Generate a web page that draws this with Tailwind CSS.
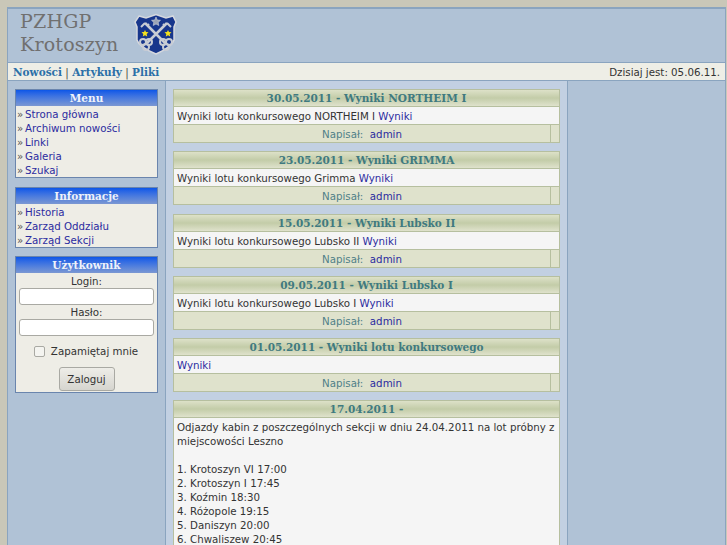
<!DOCTYPE html>
<html lang="pl">
<head>
<meta charset="UTF-8">
<title>PZHGP Krotoszyn</title>
<script src="https://cdn.jsdelivr.net/npm/@tailwindcss/browser@4"></script>
</head>
<body class="h-[545px] overflow-hidden bg-[#c9c7b8] pt-[7px] pl-[7px] pr-px font-['DejaVu_Sans',sans-serif] text-[10.25px] leading-[14px] text-[#333]">
<div class="h-[538px] overflow-hidden border-t-2 border-l border-r border-[#8aa4bf] bg-[#b0c2d6]">
  <!-- header -->
  <div class="flex h-[53px] items-start">
    <div class="ml-[12px] mt-[1px] w-[114px] font-['DejaVu_Serif',serif] text-[19px] leading-[23px] tracking-[0.2px] text-[#707070]">PZHGP<br>Krotoszyn</div>
    <svg class="mt-[4px]" width="43" height="42" viewBox="0 0 43 42">
      <path d="M5 3 L12 5 L22 1.500 L32 5 L39 3 L42 9 L40 14 L40 27 Q38 34 22 41 Q5 34 3 27 L3 14 L1 9 Z" fill="#17368c" stroke="#d5d8de" stroke-width="1.500"/>
      <path d="M13 30 L33 10 M31 30 L11 10" stroke="#c8ccd4" stroke-width="2.500" fill="none"/>
      <path d="M33 10 L37 14 M29 11 L31 13 M11 10 L7 14 M15 11 L13 13" stroke="#c8ccd4" stroke-width="2" fill="none"/>
      <g fill="none" stroke="#c8ccd4" stroke-width="2">
        <circle cx="9" cy="29" r="3"/><circle cx="15" cy="29" r="3"/><circle cx="12" cy="34" r="3"/>
        <circle cx="29" cy="29" r="3"/><circle cx="35" cy="29" r="3"/><circle cx="32" cy="34" r="3"/>
      </g>
      <polygon points="22,4 23.300,7 26.500,7.300 24.200,9.400 24.800,12.500 22,11 19.200,12.500 19.800,9.400 17.500,7.300 20.700,7" fill="#9aa3b5" stroke="#e2e5ea" stroke-width="0.500"/>
      <polygon points="11,17 12,19 14.500,19.300 12.700,21 13.200,23.500 11,22.300 8.800,23.500 9.300,21 7.500,19.300 10,19" fill="#f4e21c"/>
      <polygon points="34,17 35,19 37.500,19.300 35.700,21 36.200,23.500 34,22.300 31.800,23.500 32.300,21 30.500,19.300 33,19" fill="#f4e21c"/>
    </svg>
  </div>
  <!-- nav -->
  <div class="flex h-[19px] items-center justify-between border-t border-b border-[#8aa4bf] bg-[#eeeee6] pl-[5px] pr-[5px]">
    <div class="font-['DejaVu_Serif',serif] text-[10.5px] text-[#444]"><a class="font-bold text-[#2b70a8]">Nowości</a> | <a class="font-bold text-[#2b70a8]">Artykuły</a> | <a class="font-bold text-[#2b70a8]">Pliki</a></div>
    <div>Dzisiaj jest: 05.06.11.</div>
  </div>
  <div class="flex h-[470px]">
    <!-- left column -->
    <div class="flex w-[157px] shrink-0 flex-col gap-[8.500px] pt-[8px] pl-[7px]">
      <div class="w-[143px] border border-[#6a85ad] bg-[#eeede6]">
        <div class="h-[16px] bg-gradient-to-b from-[#0a56e8] to-[#7b97d2] text-center font-['DejaVu_Serif',serif] text-[10.5px] leading-[16px] font-bold text-[#eef2fa]">Menu</div>
        <ul class="h-[71px] pt-[1px] text-[#2b2ba0]">
          <li class="flex"><span class="ml-[1px] w-[8px] text-[#555]">»</span>Strona główna</li>
          <li class="flex"><span class="ml-[1px] w-[8px] text-[#555]">»</span>Archiwum nowości</li>
          <li class="flex"><span class="ml-[1px] w-[8px] text-[#555]">»</span>Linki</li>
          <li class="flex"><span class="ml-[1px] w-[8px] text-[#555]">»</span>Galeria</li>
          <li class="flex"><span class="ml-[1px] w-[8px] text-[#555]">»</span>Szukaj</li>
        </ul>
      </div>
      <div class="w-[143px] border border-[#6a85ad] bg-[#eeede6]">
        <div class="h-[16px] bg-gradient-to-b from-[#0a56e8] to-[#7b97d2] text-center font-['DejaVu_Serif',serif] text-[10.5px] leading-[16px] font-bold text-[#eef2fa]">Informacje</div>
        <ul class="h-[43px] pt-[1px] text-[#2b2ba0]">
          <li class="flex"><span class="ml-[1px] w-[8px] text-[#555]">»</span>Historia</li>
          <li class="flex"><span class="ml-[1px] w-[8px] text-[#555]">»</span>Zarząd Oddziału</li>
          <li class="flex"><span class="ml-[1px] w-[8px] text-[#555]">»</span>Zarząd Sekcji</li>
        </ul>
      </div>
      <div class="w-[143px] border border-[#6a85ad] bg-[#eeede6]">
        <div class="h-[16px] bg-gradient-to-b from-[#0a56e8] to-[#7b97d2] text-center font-['DejaVu_Serif',serif] text-[10.5px] leading-[16px] font-bold text-[#eef2fa]">Użytkownik</div>
        <div class="flex h-[119px] flex-col items-center">
          <div class="mt-[1px] h-[14px]">Login:</div>
          <div class="h-[17px] w-[135px] rounded-[3px] border border-[#a9a9a3] bg-white"></div>
          <div class="h-[14px]">Hasło:</div>
          <div class="h-[17px] w-[135px] rounded-[3px] border border-[#a9a9a3] bg-white"></div>
          <div class="mt-[8px] flex h-[14px] items-center gap-[6px] pr-[1px]">
            <span class="h-[11px] w-[11px] rounded-[2px] border border-[#a9a9a3] bg-[#f4f4f0]"></span>
            <span>Zapamiętaj mnie</span>
          </div>
          <div class="mt-[9px] flex h-[24px] w-[56px] items-center justify-center rounded-[3px] border border-[#a9a9a3] bg-gradient-to-b from-[#eeede8] to-[#d6d5cf]">Zaloguj</div>
        </div>
      </div>
    </div>
    <!-- center column -->
    <div class="flex w-[403px] shrink-0 flex-col gap-[8.300px] border-l border-r border-[#8aa4bf] bg-[#c2d0e2] pt-[8px] pl-[7px]">
      <div class="w-[387px] border border-[#b6bf9f] bg-[#dfe2cc]">
        <div class="h-[16px] bg-gradient-to-b from-[#dde1c8] via-[#c3cca8] to-[#dfe2cc] text-center font-['DejaVu_Serif',serif] text-[10.5px] leading-[16px] font-bold text-[#3f7a80]">30.05.2011 - Wyniki NORTHEIM I</div>
        <div class="h-[19px] border-t border-b border-[#b6bf9f] bg-[#f5f5f5] px-[3px] pt-[2px]">Wyniki lotu konkursowego NORTHEIM I <a class="text-[#2b2ba0]">Wyniki</a></div>
        <div class="flex h-[17px] leading-[18px]">
          <div class="flex-1 text-center text-[#4f8088]">Napisał:&nbsp; <a class="text-[#2b2ba0]">admin</a></div>
          <div class="w-[9px] border-l border-[#b6bf9f]"></div>
        </div>
      </div>
      <div class="w-[387px] border border-[#b6bf9f] bg-[#dfe2cc]">
        <div class="h-[16px] bg-gradient-to-b from-[#dde1c8] via-[#c3cca8] to-[#dfe2cc] text-center font-['DejaVu_Serif',serif] text-[10.5px] leading-[16px] font-bold text-[#3f7a80]">23.05.2011 - Wyniki GRIMMA</div>
        <div class="h-[19px] border-t border-b border-[#b6bf9f] bg-[#f5f5f5] px-[3px] pt-[2px]">Wyniki lotu konkursowego Grimma <a class="text-[#2b2ba0]">Wyniki</a></div>
        <div class="flex h-[17px] leading-[18px]">
          <div class="flex-1 text-center text-[#4f8088]">Napisał:&nbsp; <a class="text-[#2b2ba0]">admin</a></div>
          <div class="w-[9px] border-l border-[#b6bf9f]"></div>
        </div>
      </div>
      <div class="w-[387px] border border-[#b6bf9f] bg-[#dfe2cc]">
        <div class="h-[16px] bg-gradient-to-b from-[#dde1c8] via-[#c3cca8] to-[#dfe2cc] text-center font-['DejaVu_Serif',serif] text-[10.5px] leading-[16px] font-bold text-[#3f7a80]">15.05.2011 - Wyniki Lubsko II</div>
        <div class="h-[19px] border-t border-b border-[#b6bf9f] bg-[#f5f5f5] px-[3px] pt-[2px]">Wyniki lotu konkursowego Lubsko II <a class="text-[#2b2ba0]">Wyniki</a></div>
        <div class="flex h-[17px] leading-[18px]">
          <div class="flex-1 text-center text-[#4f8088]">Napisał:&nbsp; <a class="text-[#2b2ba0]">admin</a></div>
          <div class="w-[9px] border-l border-[#b6bf9f]"></div>
        </div>
      </div>
      <div class="w-[387px] border border-[#b6bf9f] bg-[#dfe2cc]">
        <div class="h-[16px] bg-gradient-to-b from-[#dde1c8] via-[#c3cca8] to-[#dfe2cc] text-center font-['DejaVu_Serif',serif] text-[10.5px] leading-[16px] font-bold text-[#3f7a80]">09.05.2011 - Wyniki Lubsko I</div>
        <div class="h-[19px] border-t border-b border-[#b6bf9f] bg-[#f5f5f5] px-[3px] pt-[2px]">Wyniki lotu konkursowego Lubsko I <a class="text-[#2b2ba0]">Wyniki</a></div>
        <div class="flex h-[17px] leading-[18px]">
          <div class="flex-1 text-center text-[#4f8088]">Napisał:&nbsp; <a class="text-[#2b2ba0]">admin</a></div>
          <div class="w-[9px] border-l border-[#b6bf9f]"></div>
        </div>
      </div>
      <div class="w-[387px] border border-[#b6bf9f] bg-[#dfe2cc]">
        <div class="h-[16px] bg-gradient-to-b from-[#dde1c8] via-[#c3cca8] to-[#dfe2cc] text-center font-['DejaVu_Serif',serif] text-[10.5px] leading-[16px] font-bold text-[#3f7a80]">01.05.2011 - Wyniki lotu konkursowego</div>
        <div class="h-[19px] border-t border-b border-[#b6bf9f] bg-[#f5f5f5] px-[3px] pt-[2px]"><a class="text-[#2b2ba0]">Wyniki</a></div>
        <div class="flex h-[17px] leading-[18px]">
          <div class="flex-1 text-center text-[#4f8088]">Napisał:&nbsp; <a class="text-[#2b2ba0]">admin</a></div>
          <div class="w-[9px] border-l border-[#b6bf9f]"></div>
        </div>
      </div>
      <div class="w-[387px] border border-[#b6bf9f] bg-[#dfe2cc]">
        <div class="h-[16px] bg-gradient-to-b from-[#dde1c8] via-[#c3cca8] to-[#dfe2cc] text-center font-['DejaVu_Serif',serif] text-[10.5px] leading-[16px] font-bold text-[#3f7a80]">17.04.2011 -</div>
        <div class="border-t border-[#b6bf9f] bg-[#f5f5f5] px-[3px] pt-[2px] pb-[40px]">Odjazdy kabin z poszczególnych sekcji w dniu 24.04.2011 na lot próbny z miejscowości Leszno<br><br>1. Krotoszyn VI 17:00<br>2. Krotoszyn I 17:45<br>3. Koźmin 18:30<br>4. Różopole 19:15<br>5. Daniszyn 20:00<br>6. Chwaliszew 20:45</div>
      </div>
    </div>
  </div>
</div>
</body>
</html>
